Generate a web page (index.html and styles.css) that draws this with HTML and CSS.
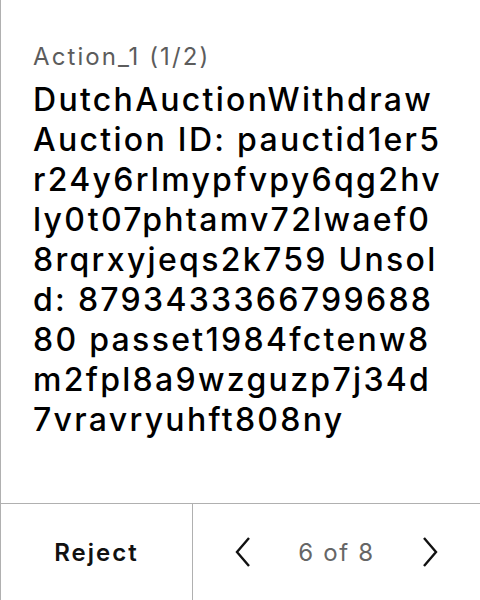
FILE: index.html
```html
<!DOCTYPE html>
<html>
<head>
<meta charset="utf-8">
<link rel="stylesheet" href="styles.css">
</head>
<body>
<div class="card">
  <div class="content">
    <div class="title">Action_1 (1/2)</div>
    <div class="body">DutchAuctionWithdraw Auction ID: pauctid1er5r24y6rlmypfvpy6qg2hvly0t07phtamv72lwaef08rqrxyjeqs2k759 Unsold: 879343336679968880 passet1984fctenw8m2fpl8a9wzguzp7j34d7vravryuhft808ny</div>
  </div>
  <div class="footer">
    <div class="reject">Reject</div>
    <div class="pager">
      <svg class="chev" viewBox="0 0 16 30" width="16" height="30"><path d="M14 1 L2 15 L14 29" fill="none" stroke="#111" stroke-width="2.4"/></svg>
      <span class="count">6 of 8</span>
      <svg class="chev" viewBox="0 0 16 30" width="16" height="30"><path d="M2 1 L14 15 L2 29" fill="none" stroke="#111" stroke-width="2.4"/></svg>
    </div>
  </div>
</div>
</body>
</html>
```
FILE: styles.css
```css
html, body {
  margin: 0;
  padding: 0;
  background: #fff;
}
.card {
  width: 480px;
  height: 600px;
  box-sizing: border-box;
  border-left: 1px solid #b0b0b0;
  display: flex;
  flex-direction: column;
  font-family: Inter, "Noto Sans", sans-serif;
}
.content {
  flex: 1;
  padding: 40px 32px 0 32px;
}
.title {
  font-size: 24px;
  line-height: 34px;
  letter-spacing: 2.1px;
  color: #5c5c5c;
}
.body {
  font-size: 32px;
  line-height: 40px;
  letter-spacing: 2.3px;
  font-weight: 500;
  color: #000;
  word-break: break-all;
  margin-top: 6px;
}
.footer {
  height: 96px;
  border-top: 1px solid #b0b0b0;
  display: grid;
  grid-template-columns: 192px 1fr;
}
.reject {
  display: flex;
  align-items: center;
  justify-content: center;
  font-size: 24px;
  font-weight: 600;
  letter-spacing: 2px;
  color: #111;
  border-right: 1px solid #b0b0b0;
}
.pager {
  display: flex;
  align-items: center;
  justify-content: space-between;
  padding: 0 42px;
}
.count {
  font-size: 24px;
  letter-spacing: 1.7px;
  color: #666;
}
```
